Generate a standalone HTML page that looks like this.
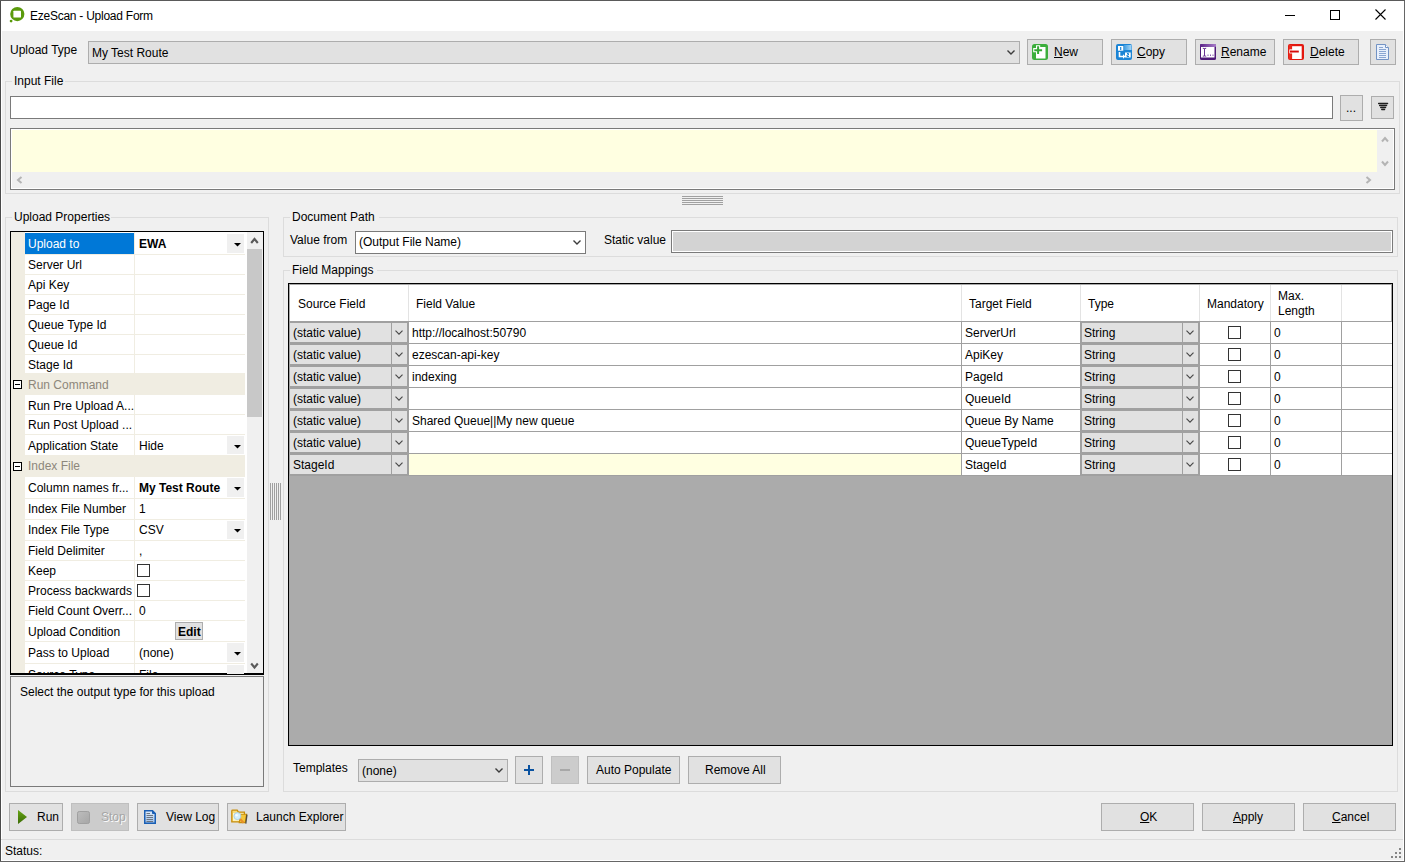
<!DOCTYPE html><html><head><meta charset="utf-8"><style>
html,body{margin:0;padding:0;width:1405px;height:862px;overflow:hidden;background:#f0f0f0}
.a{position:absolute;box-sizing:border-box}
.t{position:absolute;white-space:nowrap;font-family:"Liberation Sans",sans-serif;color:#000}
svg.a{overflow:visible}
</style></head><body>
<div class="a" style="left:0px;top:0px;width:1405px;height:862px;background:#f0f0f0"></div>
<div class="a" style="left:0px;top:0px;width:1405px;height:31px;background:#fff"></div>
<div class="a" style="left:1px;top:31px;width:1px;height:830px;background:#fff"></div>
<div class="a" style="left:1403px;top:31px;width:1px;height:830px;background:#fff"></div>
<div class="a" style="left:1px;top:860px;width:1403px;height:1px;background:#fff"></div>
<div class="a" style="left:0px;top:0px;width:1px;height:862px;background:#4a4a4a"></div>
<div class="a" style="left:1404px;top:0px;width:1px;height:862px;background:#666"></div>
<div class="a" style="left:0px;top:0px;width:1405px;height:1px;background:#5a5a5a"></div>
<div class="a" style="left:0px;top:861px;width:1405px;height:1px;background:#666"></div>
<svg class="a" style="left:9px;top:6px" width="18" height="18" viewBox="0 0 18 18"><circle cx="8.3" cy="8.1" r="7.1" fill="#5a9a0c"/><rect x="4.4" y="4.7" width="7.6" height="6.9" rx="0.6" fill="#fff"/><circle cx="2.1" cy="15.1" r="1.4" fill="#5a9a0c"/></svg>
<div class="t" style="left:30px;top:9px;font-size:12px;line-height:15px;letter-spacing:-0.25px">EzeScan - Upload Form</div>
<div class="a" style="left:1285px;top:15px;width:10px;height:1px;background:#000"></div>
<div class="a" style="left:1330px;top:10px;width:10px;height:10px;border:1px solid #000;"></div>
<svg class="a" style="left:1375px;top:9px" width="12" height="12" viewBox="0 0 12 12"><path d="M0.5 0.5 L10.5 10.5 M10.5 0.5 L0.5 10.5" stroke="#000" stroke-width="1.1"/></svg>
<div class="t" style="left:10px;top:43px;font-size:12px;line-height:15px;">Upload Type</div>
<div class="a" style="left:88px;top:41px;width:932px;height:23px;border:1px solid #adadad;background:#e1e1e1;"></div>
<div class="t" style="left:92px;top:46px;font-size:12px;line-height:15px;">My Test Route</div>
<svg class="a" style="left:1007px;top:50px" width="8" height="5" viewBox="0 0 8 5"><path d="M0.5 0.5 L4 4 L7.5 0.5" fill="none" stroke="#3c3c3c" stroke-width="1.4"/></svg>
<div class="a" style="left:1027px;top:39px;width:76px;height:26px;border:1px solid #adadad;background:#e1e1e1;"></div>
<div class="t" style="left:1054px;top:45px;font-size:12px;line-height:15px;"><u>N</u>ew</div>
<div class="a" style="left:1111px;top:39px;width:76px;height:26px;border:1px solid #adadad;background:#e1e1e1;"></div>
<div class="t" style="left:1137px;top:45px;font-size:12px;line-height:15px;"><u>C</u>opy</div>
<div class="a" style="left:1195px;top:39px;width:80px;height:26px;border:1px solid #adadad;background:#e1e1e1;"></div>
<div class="t" style="left:1221px;top:45px;font-size:12px;line-height:15px;"><u>R</u>ename</div>
<div class="a" style="left:1283px;top:39px;width:76px;height:26px;border:1px solid #adadad;background:#e1e1e1;"></div>
<div class="t" style="left:1310px;top:45px;font-size:12px;line-height:15px;"><u>D</u>elete</div>
<div class="a" style="left:1370px;top:39px;width:26px;height:26px;border:1px solid #adadad;background:#e1e1e1;"></div>
<svg class="a" style="left:1032px;top:44px" width="16" height="16" viewBox="0 0 16 16"><rect x="0" y="0" width="16" height="16" rx="2.5" fill="#3cae3c"/><rect x="4" y="3" width="9.5" height="11.5" fill="#fff"/><path d="M6.1 1.2 v10 M1.2 6.2 h10" stroke="#fff" stroke-width="4.2"/><path d="M6.1 2.3 v7.8 M2.3 6.2 h7.8" stroke="#35a835" stroke-width="2"/></svg>
<svg class="a" style="left:1116px;top:44px" width="16" height="16" viewBox="0 0 16 16"><defs><linearGradient id="cg" x1="0" y1="0" x2="1" y2="0"><stop offset="0" stop-color="#3d9be0"/><stop offset="1" stop-color="#a8d8f8"/></linearGradient></defs><rect x="0" y="0" width="16" height="16" rx="2" fill="#1b84d5"/><rect x="8" y="1" width="7.5" height="5" fill="url(#cg)"/><rect x="2" y="2" width="5.3" height="4.7" fill="#fff"/><path d="M4.7 3 v3" stroke="#1b84d5" stroke-width="1.2"/><path d="M3.5 8 V12.5 H7.5" fill="none" stroke="#fff" stroke-width="1.6"/><path d="M7 10.3 L9.5 12.5 L7 14.7 Z" fill="#fff"/><rect x="9" y="8.5" width="5.7" height="5" fill="#fff"/><path d="M11 9.5 h1.5 v1.5 h-1.5 v1.5 h2" fill="none" stroke="#1b84d5" stroke-width="1"/></svg>
<svg class="a" style="left:1200px;top:44px" width="16" height="16" viewBox="0 0 16 16"><defs><linearGradient id="rg" x1="0" y1="0" x2="1" y2="0"><stop offset="0" stop-color="#5b2288"/><stop offset="1" stop-color="#a77cc8"/></linearGradient></defs><rect x="0" y="0" width="16" height="16" rx="1.5" fill="#4f1a78"/><rect x="0" y="0" width="16" height="3" rx="1" fill="url(#rg)"/><rect x="1" y="3" width="13.5" height="10.5" fill="#fff"/><path d="M4.5 4.5 V12 M2.8 4.3 Q4.5 4.8 6.2 4.3 M2.8 12.2 Q4.5 11.7 6.2 12.2" fill="none" stroke="#6a3494" stroke-width="1"/><path d="M8 10.5 v1.5 M10.5 10.5 v1.5 M13 10.5 v1.5" stroke="#8a5ab0" stroke-width="1"/></svg>
<svg class="a" style="left:1288px;top:44px" width="16" height="16" viewBox="0 0 16 16"><rect x="0" y="0" width="16" height="16" rx="2" fill="#e3170f"/><rect x="0.8" y="1" width="3" height="14" fill="#f03a2a" opacity="0.6"/><rect x="4.1" y="2.2" width="9.6" height="12.8" fill="#fff"/><rect x="1.2" y="5.2" width="10" height="4.4" rx="0.8" fill="#fff" opacity="0.85"/><rect x="2" y="6.6" width="8.8" height="1.9" fill="#d70a0a"/></svg>
<svg class="a" style="left:1376px;top:44px" width="13" height="16" viewBox="0 0 13 16"><path d="M0.5 0.5 H9.5 L12.5 3.5 V15.5 H0.5 Z" fill="#e8f0fc" stroke="#7393c4"/><path d="M9.5 0.5 V3.5 H12.5" fill="#fff" stroke="#7393c4"/><path d="M3 3.5 h4 M3 5.5 h7 M3 7.5 h7 M3 9.5 h7 M3 11.5 h7 M3 13.5 h7" stroke="#8aa6d2" stroke-width="1"/></svg>
<div class="a" style="left:5px;top:81px;width:1395px;height:113px;border:1px solid #dcdcdc;"></div>
<div class="a" style="left:12px;top:78px;width:53px;height:9px;background:#f0f0f0"></div>
<div class="t" style="left:14px;top:74px;font-size:12px;line-height:15px;">Input File</div>
<div class="a" style="left:10px;top:96px;width:1323px;height:23px;border:1px solid #7a7a7a;background:#fff;"></div>
<div class="a" style="left:1340px;top:95px;width:23px;height:26px;border:1px solid #adadad;background:#e1e1e1;"></div>
<div class="t" style="left:1346px;top:101px;font-size:12px;line-height:15px;">...</div>
<div class="a" style="left:1371px;top:96px;width:23px;height:23px;border:1px solid #adadad;background:#e1e1e1;"></div>
<svg class="a" style="left:1377px;top:102px" width="12" height="9" viewBox="0 0 12 9"><path d="M1.6 1.5H10.6 M2.6 3.5H9.6 M3.7 5.5H8.6 M4.7 7.5H7.6" stroke="#1e1e1e" stroke-width="1.3" stroke-linecap="round"/></svg>
<div class="a" style="left:10px;top:128px;width:1385px;height:62px;border:1px solid #7a7a7a;background:#fff;"></div>
<div class="a" style="left:12px;top:130px;width:1381px;height:58px;background:#f0f0f0"></div>
<div class="a" style="left:12px;top:130px;width:1365px;height:42px;background:#ffffe1"></div>
<svg class="a" style="left:1381px;top:136px" width="8" height="7" viewBox="0 0 8 7"><path d="M1 5.5 L4 2 L7 5.5" fill="none" stroke="#b4b4b4" stroke-width="2"/></svg>
<svg class="a" style="left:1381px;top:160px" width="8" height="7" viewBox="0 0 8 7"><path d="M1 1.5 L4 5 L7 1.5" fill="none" stroke="#b4b4b4" stroke-width="2"/></svg>
<svg class="a" style="left:1365px;top:176px" width="7" height="8" viewBox="0 0 7 8"><path d="M1.5 1 L5 4 L1.5 7" fill="none" stroke="#b4b4b4" stroke-width="2"/></svg>
<svg class="a" style="left:16px;top:176px" width="7" height="8" viewBox="0 0 7 8"><path d="M5.5 1 L2 4 L5.5 7" fill="none" stroke="#b4b4b4" stroke-width="2"/></svg>
<div class="a" style="left:682px;top:196px;width:41px;height:1px;background:#a0a0a0"></div>
<div class="a" style="left:682px;top:198px;width:41px;height:1px;background:#a0a0a0"></div>
<div class="a" style="left:682px;top:200px;width:41px;height:1px;background:#a0a0a0"></div>
<div class="a" style="left:682px;top:202px;width:41px;height:1px;background:#a0a0a0"></div>
<div class="a" style="left:682px;top:204px;width:41px;height:1px;background:#a0a0a0"></div>
<div class="a" style="left:5px;top:217px;width:264px;height:575px;border:1px solid #dcdcdc;"></div>
<div class="a" style="left:12px;top:210px;width:99px;height:13px;background:#f0f0f0"></div>
<div class="t" style="left:14px;top:210px;font-size:12px;line-height:15px;">Upload Properties</div>
<div class="a" style="left:10px;top:231px;width:254px;height:443px;border:1px solid #000;background:#fff;"></div>
<div class="a" style="left:11px;top:232px;width:14px;height:441px;background:#f0ede2"></div>
<div class="a" style="left:247px;top:232px;width:16px;height:441px;background:#f0f0f0"></div>
<div class="a" style="left:247px;top:249px;width:15px;height:168px;background:#c8c8c8"></div>
<svg class="a" style="left:250px;top:236px" width="9" height="9" viewBox="0 0 9 9"><path d="M1.2 7 L4.5 3 L7.8 7" fill="none" stroke="#5a5a5a" stroke-width="2.1"/></svg>
<svg class="a" style="left:250px;top:661px" width="9" height="9" viewBox="0 0 9 9"><path d="M1.2 2.5 L4.5 6.5 L7.8 2.5" fill="none" stroke="#5a5a5a" stroke-width="2.1"/></svg>
<div class="a" style="left:25px;top:254px;width:222px;height:1px;background:#f0ede2"></div>
<div class="a" style="left:25px;top:233px;width:109px;height:21px;background:#0078d7"></div>
<div class="t" style="left:28px;top:237px;font-size:12px;line-height:15px;color:#fff">Upload to</div>
<div class="t" style="left:139px;top:237px;font-size:12px;line-height:15px;"><b>EWA</b></div>
<div class="a" style="left:227px;top:234px;width:17px;height:19px;background:#f0f0f0"></div>
<svg class="a" style="left:233.5px;top:243px" width="7" height="4" viewBox="0 0 7 4"><path d="M0 0 H7 L3.5 3.6 Z" fill="#000"/></svg>
<div class="a" style="left:25px;top:274px;width:222px;height:1px;background:#f0ede2"></div>
<div class="t" style="left:28px;top:258px;font-size:12px;line-height:15px;">Server Url</div>
<div class="a" style="left:25px;top:294px;width:222px;height:1px;background:#f0ede2"></div>
<div class="t" style="left:28px;top:278px;font-size:12px;line-height:15px;">Api Key</div>
<div class="a" style="left:25px;top:314px;width:222px;height:1px;background:#f0ede2"></div>
<div class="t" style="left:28px;top:298px;font-size:12px;line-height:15px;">Page Id</div>
<div class="a" style="left:25px;top:334px;width:222px;height:1px;background:#f0ede2"></div>
<div class="t" style="left:28px;top:318px;font-size:12px;line-height:15px;">Queue Type Id</div>
<div class="a" style="left:25px;top:354px;width:222px;height:1px;background:#f0ede2"></div>
<div class="t" style="left:28px;top:338px;font-size:12px;line-height:15px;">Queue Id</div>
<div class="a" style="left:25px;top:373px;width:222px;height:1px;background:#f0ede2"></div>
<div class="t" style="left:28px;top:358px;font-size:12px;line-height:15px;">Stage Id</div>
<div class="a" style="left:25px;top:374px;width:222px;height:21px;background:#f0ede2"></div>
<div class="a" style="left:13px;top:380px;width:9px;height:9px;border:1px solid #000;background:#fff;"></div>
<div class="a" style="left:15px;top:384px;width:5px;height:1px;background:#000"></div>
<div class="t" style="left:28px;top:378px;font-size:12px;line-height:15px;color:#8d877b">Run Command</div>
<div class="a" style="left:25px;top:414px;width:222px;height:1px;background:#f0ede2"></div>
<div class="t" style="left:28px;top:399px;font-size:12px;line-height:15px;">Run Pre Upload A...</div>
<div class="a" style="left:25px;top:434px;width:222px;height:1px;background:#f0ede2"></div>
<div class="t" style="left:28px;top:418px;font-size:12px;line-height:15px;">Run Post Upload ...</div>
<div class="a" style="left:25px;top:455px;width:222px;height:1px;background:#f0ede2"></div>
<div class="t" style="left:28px;top:439px;font-size:12px;line-height:15px;">Application State</div>
<div class="t" style="left:139px;top:439px;font-size:12px;line-height:15px;">Hide</div>
<div class="a" style="left:227px;top:436px;width:17px;height:18px;background:#f0f0f0"></div>
<svg class="a" style="left:233.5px;top:445px" width="7" height="4" viewBox="0 0 7 4"><path d="M0 0 H7 L3.5 3.6 Z" fill="#000"/></svg>
<div class="a" style="left:25px;top:456px;width:222px;height:21px;background:#f0ede2"></div>
<div class="a" style="left:13px;top:462px;width:9px;height:9px;border:1px solid #000;background:#fff;"></div>
<div class="a" style="left:15px;top:466px;width:5px;height:1px;background:#000"></div>
<div class="t" style="left:28px;top:459px;font-size:12px;line-height:15px;color:#8d877b">Index File</div>
<div class="a" style="left:25px;top:498px;width:222px;height:1px;background:#f0ede2"></div>
<div class="t" style="left:28px;top:481px;font-size:12px;line-height:15px;">Column names fr...</div>
<div class="t" style="left:139px;top:481px;font-size:12px;line-height:15px;"><b>My Test Route</b></div>
<div class="a" style="left:227px;top:478px;width:17px;height:19px;background:#f0f0f0"></div>
<svg class="a" style="left:233.5px;top:487px" width="7" height="4" viewBox="0 0 7 4"><path d="M0 0 H7 L3.5 3.6 Z" fill="#000"/></svg>
<div class="a" style="left:25px;top:519px;width:222px;height:1px;background:#f0ede2"></div>
<div class="t" style="left:28px;top:502px;font-size:12px;line-height:15px;">Index File Number</div>
<div class="t" style="left:139px;top:502px;font-size:12px;line-height:15px;">1</div>
<div class="a" style="left:25px;top:540px;width:222px;height:1px;background:#f0ede2"></div>
<div class="t" style="left:28px;top:523px;font-size:12px;line-height:15px;">Index File Type</div>
<div class="t" style="left:139px;top:523px;font-size:12px;line-height:15px;">CSV</div>
<div class="a" style="left:227px;top:521px;width:17px;height:18px;background:#f0f0f0"></div>
<svg class="a" style="left:233.5px;top:529px" width="7" height="4" viewBox="0 0 7 4"><path d="M0 0 H7 L3.5 3.6 Z" fill="#000"/></svg>
<div class="a" style="left:25px;top:560px;width:222px;height:1px;background:#f0ede2"></div>
<div class="t" style="left:28px;top:544px;font-size:12px;line-height:15px;">Field Delimiter</div>
<div class="t" style="left:139px;top:544px;font-size:12px;line-height:15px;">,</div>
<div class="a" style="left:25px;top:580px;width:222px;height:1px;background:#f0ede2"></div>
<div class="t" style="left:28px;top:564px;font-size:12px;line-height:15px;">Keep</div>
<div class="a" style="left:137px;top:564px;width:13px;height:13px;border:1px solid #333;background:#fff;"></div>
<div class="a" style="left:25px;top:600px;width:222px;height:1px;background:#f0ede2"></div>
<div class="t" style="left:28px;top:584px;font-size:12px;line-height:15px;">Process backwards</div>
<div class="a" style="left:137px;top:584px;width:13px;height:13px;border:1px solid #333;background:#fff;"></div>
<div class="a" style="left:25px;top:620px;width:222px;height:1px;background:#f0ede2"></div>
<div class="t" style="left:28px;top:604px;font-size:12px;line-height:15px;">Field Count Overr...</div>
<div class="t" style="left:139px;top:604px;font-size:12px;line-height:15px;">0</div>
<div class="a" style="left:25px;top:641px;width:222px;height:1px;background:#f0ede2"></div>
<div class="t" style="left:28px;top:625px;font-size:12px;line-height:15px;">Upload Condition</div>
<div class="a" style="left:175px;top:622px;width:28px;height:18px;border:1px solid #adadad;background:#e1e1e1;"></div>
<div class="t" style="left:178px;top:625px;font-size:12px;line-height:15px;"><b>Edit</b></div>
<div class="a" style="left:25px;top:663px;width:222px;height:1px;background:#f0ede2"></div>
<div class="t" style="left:28px;top:646px;font-size:12px;line-height:15px;">Pass to Upload</div>
<div class="t" style="left:139px;top:646px;font-size:12px;line-height:15px;">(none)</div>
<div class="a" style="left:227px;top:643px;width:17px;height:19px;background:#f0f0f0"></div>
<svg class="a" style="left:233.5px;top:652px" width="7" height="4" viewBox="0 0 7 4"><path d="M0 0 H7 L3.5 3.6 Z" fill="#000"/></svg>
<div class="a" style="left:25px;top:685px;width:222px;height:1px;background:#f0ede2"></div>
<div class="t" style="left:28px;top:668px;font-size:12px;line-height:15px;">Source Type</div>
<div class="t" style="left:139px;top:668px;font-size:12px;line-height:15px;">File</div>
<div class="a" style="left:227px;top:665px;width:17px;height:19px;background:#f0f0f0"></div>
<svg class="a" style="left:233.5px;top:674px" width="7" height="4" viewBox="0 0 7 4"><path d="M0 0 H7 L3.5 3.6 Z" fill="#000"/></svg>
<div class="a" style="left:134px;top:232px;width:1px;height:441px;background:#f0ede2"></div>
<div class="a" style="left:245px;top:232px;width:2px;height:441px;background:#fff"></div>
<div class="a" style="left:10px;top:674px;width:254px;height:1px;background:#000"></div>
<div class="a" style="left:10px;top:675px;width:254px;height:1px;background:#f0f0f0"></div>
<div class="a" style="left:10px;top:676px;width:254px;height:111px;border:1px solid #7a7a7a;background:#f0f0f0;"></div>
<div class="t" style="left:20px;top:685px;font-size:12px;line-height:15px;">Select the output type for this upload</div>
<div class="a" style="left:270px;top:483px;width:1px;height:37px;background:#a0a0a0"></div>
<div class="a" style="left:272px;top:483px;width:1px;height:37px;background:#a0a0a0"></div>
<div class="a" style="left:274px;top:483px;width:1px;height:37px;background:#a0a0a0"></div>
<div class="a" style="left:276px;top:483px;width:1px;height:37px;background:#a0a0a0"></div>
<div class="a" style="left:278px;top:483px;width:1px;height:37px;background:#a0a0a0"></div>
<div class="a" style="left:280px;top:483px;width:1px;height:37px;background:#a0a0a0"></div>
<div class="a" style="left:283px;top:217px;width:1115px;height:40px;border:1px solid #dcdcdc;"></div>
<div class="a" style="left:290px;top:210px;width:89px;height:13px;background:#f0f0f0"></div>
<div class="t" style="left:292px;top:210px;font-size:12px;line-height:15px;">Document Path</div>
<div class="t" style="left:290px;top:233px;font-size:12px;line-height:15px;">Value from</div>
<div class="a" style="left:355px;top:231px;width:231px;height:23px;border:1px solid #7a7a7a;background:#fff;"></div>
<div class="t" style="left:359px;top:235px;font-size:12px;line-height:15px;">(Output File Name)</div>
<svg class="a" style="left:573px;top:240px" width="8" height="5" viewBox="0 0 8 5"><path d="M0.5 0.5 L4 4 L7.5 0.5" fill="none" stroke="#3c3c3c" stroke-width="1.4"/></svg>
<div class="t" style="left:604px;top:233px;font-size:12px;line-height:15px;">Static value</div>
<div class="a" style="left:671px;top:230px;width:722px;height:23px;border:1px solid #7a7a7a;background:#fff;"></div>
<div class="a" style="left:673px;top:232px;width:718px;height:19px;background:#d3d3d3"></div>
<div class="a" style="left:283px;top:270px;width:1115px;height:522px;border:1px solid #dcdcdc;"></div>
<div class="a" style="left:290px;top:263px;width:87px;height:14px;background:#f0f0f0"></div>
<div class="t" style="left:292px;top:263px;font-size:12px;line-height:15px;">Field Mappings</div>
<div class="a" style="left:288px;top:283px;width:1105px;height:463px;border:1px solid #000;background:#ababab;"></div>
<div class="a" style="left:289px;top:284px;width:1103px;height:461px;border:1px solid #a8a8a8;"></div>
<div class="a" style="left:290px;top:285px;width:1101px;height:36px;background:#fff"></div>
<div class="a" style="left:289px;top:321px;width:1103px;height:1px;background:#a0a0a0"></div>
<div class="a" style="left:408px;top:285px;width:1px;height:36px;background:#e3e3e3"></div>
<div class="a" style="left:961px;top:285px;width:1px;height:36px;background:#e3e3e3"></div>
<div class="a" style="left:1080px;top:285px;width:1px;height:36px;background:#e3e3e3"></div>
<div class="a" style="left:1199px;top:285px;width:1px;height:36px;background:#e3e3e3"></div>
<div class="a" style="left:1270px;top:285px;width:1px;height:36px;background:#e3e3e3"></div>
<div class="a" style="left:1341px;top:285px;width:1px;height:36px;background:#e3e3e3"></div>
<div class="t" style="left:298px;top:297px;font-size:12px;line-height:15px;">Source Field</div>
<div class="t" style="left:416px;top:297px;font-size:12px;line-height:15px;">Field Value</div>
<div class="t" style="left:969px;top:297px;font-size:12px;line-height:15px;">Target Field</div>
<div class="t" style="left:1088px;top:297px;font-size:12px;line-height:15px;">Type</div>
<div class="t" style="left:1207px;top:297px;font-size:12px;line-height:15px;">Mandatory</div>
<div class="t" style="left:1278px;top:289px;font-size:12px;line-height:15px;">Max.</div>
<div class="t" style="left:1278px;top:304px;font-size:12px;line-height:15px;">Length</div>
<div class="a" style="left:289px;top:322px;width:1103px;height:22px;background:#fff"></div>
<div class="a" style="left:289px;top:343px;width:1103px;height:1px;background:#a0a0a0"></div>
<div class="a" style="left:408px;top:322px;width:1px;height:22px;background:#a0a0a0"></div>
<div class="a" style="left:961px;top:322px;width:1px;height:22px;background:#a0a0a0"></div>
<div class="a" style="left:1080px;top:322px;width:1px;height:22px;background:#a0a0a0"></div>
<div class="a" style="left:1199px;top:322px;width:1px;height:22px;background:#a0a0a0"></div>
<div class="a" style="left:1270px;top:322px;width:1px;height:22px;background:#a0a0a0"></div>
<div class="a" style="left:1341px;top:322px;width:1px;height:22px;background:#a0a0a0"></div>
<div class="a" style="left:289px;top:322px;width:119px;height:21px;border:1px solid #a0a0a0;background:#e1e1e1;"></div>
<div class="a" style="left:391px;top:322px;width:1px;height:21px;background:#a0a0a0"></div>
<svg class="a" style="left:395px;top:330px" width="8" height="6" viewBox="0 0 8 6"><path d="M0.5 0.6 L4 4.1 L7.5 0.6" fill="none" stroke="#484848" stroke-width="1.15"/></svg>
<div class="a" style="left:1081px;top:322px;width:118px;height:21px;border:1px solid #a0a0a0;background:#e1e1e1;"></div>
<div class="a" style="left:1182px;top:322px;width:1px;height:21px;background:#a0a0a0"></div>
<svg class="a" style="left:1186px;top:330px" width="8" height="6" viewBox="0 0 8 6"><path d="M0.5 0.6 L4 4.1 L7.5 0.6" fill="none" stroke="#484848" stroke-width="1.15"/></svg>
<div class="t" style="left:293px;top:326px;font-size:12px;line-height:15px;">(static value)</div>
<div class="t" style="left:412px;top:326px;font-size:12px;line-height:15px;">http://localhost:50790</div>
<div class="t" style="left:965px;top:326px;font-size:12px;line-height:15px;">ServerUrl</div>
<div class="t" style="left:1084px;top:326px;font-size:12px;line-height:15px;">String</div>
<div class="a" style="left:1228px;top:326px;width:13px;height:13px;border:1px solid #333;background:#fff;"></div>
<div class="t" style="left:1274px;top:326px;font-size:12px;line-height:15px;">0</div>
<div class="a" style="left:289px;top:344px;width:1103px;height:22px;background:#fff"></div>
<div class="a" style="left:289px;top:365px;width:1103px;height:1px;background:#a0a0a0"></div>
<div class="a" style="left:408px;top:344px;width:1px;height:22px;background:#a0a0a0"></div>
<div class="a" style="left:961px;top:344px;width:1px;height:22px;background:#a0a0a0"></div>
<div class="a" style="left:1080px;top:344px;width:1px;height:22px;background:#a0a0a0"></div>
<div class="a" style="left:1199px;top:344px;width:1px;height:22px;background:#a0a0a0"></div>
<div class="a" style="left:1270px;top:344px;width:1px;height:22px;background:#a0a0a0"></div>
<div class="a" style="left:1341px;top:344px;width:1px;height:22px;background:#a0a0a0"></div>
<div class="a" style="left:289px;top:344px;width:119px;height:21px;border:1px solid #a0a0a0;background:#e1e1e1;"></div>
<div class="a" style="left:391px;top:344px;width:1px;height:21px;background:#a0a0a0"></div>
<svg class="a" style="left:395px;top:352px" width="8" height="6" viewBox="0 0 8 6"><path d="M0.5 0.6 L4 4.1 L7.5 0.6" fill="none" stroke="#484848" stroke-width="1.15"/></svg>
<div class="a" style="left:1081px;top:344px;width:118px;height:21px;border:1px solid #a0a0a0;background:#e1e1e1;"></div>
<div class="a" style="left:1182px;top:344px;width:1px;height:21px;background:#a0a0a0"></div>
<svg class="a" style="left:1186px;top:352px" width="8" height="6" viewBox="0 0 8 6"><path d="M0.5 0.6 L4 4.1 L7.5 0.6" fill="none" stroke="#484848" stroke-width="1.15"/></svg>
<div class="t" style="left:293px;top:348px;font-size:12px;line-height:15px;">(static value)</div>
<div class="t" style="left:412px;top:348px;font-size:12px;line-height:15px;">ezescan-api-key</div>
<div class="t" style="left:965px;top:348px;font-size:12px;line-height:15px;">ApiKey</div>
<div class="t" style="left:1084px;top:348px;font-size:12px;line-height:15px;">String</div>
<div class="a" style="left:1228px;top:348px;width:13px;height:13px;border:1px solid #333;background:#fff;"></div>
<div class="t" style="left:1274px;top:348px;font-size:12px;line-height:15px;">0</div>
<div class="a" style="left:289px;top:366px;width:1103px;height:22px;background:#fff"></div>
<div class="a" style="left:289px;top:387px;width:1103px;height:1px;background:#a0a0a0"></div>
<div class="a" style="left:408px;top:366px;width:1px;height:22px;background:#a0a0a0"></div>
<div class="a" style="left:961px;top:366px;width:1px;height:22px;background:#a0a0a0"></div>
<div class="a" style="left:1080px;top:366px;width:1px;height:22px;background:#a0a0a0"></div>
<div class="a" style="left:1199px;top:366px;width:1px;height:22px;background:#a0a0a0"></div>
<div class="a" style="left:1270px;top:366px;width:1px;height:22px;background:#a0a0a0"></div>
<div class="a" style="left:1341px;top:366px;width:1px;height:22px;background:#a0a0a0"></div>
<div class="a" style="left:289px;top:366px;width:119px;height:21px;border:1px solid #a0a0a0;background:#e1e1e1;"></div>
<div class="a" style="left:391px;top:366px;width:1px;height:21px;background:#a0a0a0"></div>
<svg class="a" style="left:395px;top:374px" width="8" height="6" viewBox="0 0 8 6"><path d="M0.5 0.6 L4 4.1 L7.5 0.6" fill="none" stroke="#484848" stroke-width="1.15"/></svg>
<div class="a" style="left:1081px;top:366px;width:118px;height:21px;border:1px solid #a0a0a0;background:#e1e1e1;"></div>
<div class="a" style="left:1182px;top:366px;width:1px;height:21px;background:#a0a0a0"></div>
<svg class="a" style="left:1186px;top:374px" width="8" height="6" viewBox="0 0 8 6"><path d="M0.5 0.6 L4 4.1 L7.5 0.6" fill="none" stroke="#484848" stroke-width="1.15"/></svg>
<div class="t" style="left:293px;top:370px;font-size:12px;line-height:15px;">(static value)</div>
<div class="t" style="left:412px;top:370px;font-size:12px;line-height:15px;">indexing</div>
<div class="t" style="left:965px;top:370px;font-size:12px;line-height:15px;">PageId</div>
<div class="t" style="left:1084px;top:370px;font-size:12px;line-height:15px;">String</div>
<div class="a" style="left:1228px;top:370px;width:13px;height:13px;border:1px solid #333;background:#fff;"></div>
<div class="t" style="left:1274px;top:370px;font-size:12px;line-height:15px;">0</div>
<div class="a" style="left:289px;top:388px;width:1103px;height:22px;background:#fff"></div>
<div class="a" style="left:289px;top:409px;width:1103px;height:1px;background:#a0a0a0"></div>
<div class="a" style="left:408px;top:388px;width:1px;height:22px;background:#a0a0a0"></div>
<div class="a" style="left:961px;top:388px;width:1px;height:22px;background:#a0a0a0"></div>
<div class="a" style="left:1080px;top:388px;width:1px;height:22px;background:#a0a0a0"></div>
<div class="a" style="left:1199px;top:388px;width:1px;height:22px;background:#a0a0a0"></div>
<div class="a" style="left:1270px;top:388px;width:1px;height:22px;background:#a0a0a0"></div>
<div class="a" style="left:1341px;top:388px;width:1px;height:22px;background:#a0a0a0"></div>
<div class="a" style="left:289px;top:388px;width:119px;height:21px;border:1px solid #a0a0a0;background:#e1e1e1;"></div>
<div class="a" style="left:391px;top:388px;width:1px;height:21px;background:#a0a0a0"></div>
<svg class="a" style="left:395px;top:396px" width="8" height="6" viewBox="0 0 8 6"><path d="M0.5 0.6 L4 4.1 L7.5 0.6" fill="none" stroke="#484848" stroke-width="1.15"/></svg>
<div class="a" style="left:1081px;top:388px;width:118px;height:21px;border:1px solid #a0a0a0;background:#e1e1e1;"></div>
<div class="a" style="left:1182px;top:388px;width:1px;height:21px;background:#a0a0a0"></div>
<svg class="a" style="left:1186px;top:396px" width="8" height="6" viewBox="0 0 8 6"><path d="M0.5 0.6 L4 4.1 L7.5 0.6" fill="none" stroke="#484848" stroke-width="1.15"/></svg>
<div class="t" style="left:293px;top:392px;font-size:12px;line-height:15px;">(static value)</div>
<div class="t" style="left:965px;top:392px;font-size:12px;line-height:15px;">QueueId</div>
<div class="t" style="left:1084px;top:392px;font-size:12px;line-height:15px;">String</div>
<div class="a" style="left:1228px;top:392px;width:13px;height:13px;border:1px solid #333;background:#fff;"></div>
<div class="t" style="left:1274px;top:392px;font-size:12px;line-height:15px;">0</div>
<div class="a" style="left:289px;top:410px;width:1103px;height:22px;background:#fff"></div>
<div class="a" style="left:289px;top:431px;width:1103px;height:1px;background:#a0a0a0"></div>
<div class="a" style="left:408px;top:410px;width:1px;height:22px;background:#a0a0a0"></div>
<div class="a" style="left:961px;top:410px;width:1px;height:22px;background:#a0a0a0"></div>
<div class="a" style="left:1080px;top:410px;width:1px;height:22px;background:#a0a0a0"></div>
<div class="a" style="left:1199px;top:410px;width:1px;height:22px;background:#a0a0a0"></div>
<div class="a" style="left:1270px;top:410px;width:1px;height:22px;background:#a0a0a0"></div>
<div class="a" style="left:1341px;top:410px;width:1px;height:22px;background:#a0a0a0"></div>
<div class="a" style="left:289px;top:410px;width:119px;height:21px;border:1px solid #a0a0a0;background:#e1e1e1;"></div>
<div class="a" style="left:391px;top:410px;width:1px;height:21px;background:#a0a0a0"></div>
<svg class="a" style="left:395px;top:418px" width="8" height="6" viewBox="0 0 8 6"><path d="M0.5 0.6 L4 4.1 L7.5 0.6" fill="none" stroke="#484848" stroke-width="1.15"/></svg>
<div class="a" style="left:1081px;top:410px;width:118px;height:21px;border:1px solid #a0a0a0;background:#e1e1e1;"></div>
<div class="a" style="left:1182px;top:410px;width:1px;height:21px;background:#a0a0a0"></div>
<svg class="a" style="left:1186px;top:418px" width="8" height="6" viewBox="0 0 8 6"><path d="M0.5 0.6 L4 4.1 L7.5 0.6" fill="none" stroke="#484848" stroke-width="1.15"/></svg>
<div class="t" style="left:293px;top:414px;font-size:12px;line-height:15px;">(static value)</div>
<div class="t" style="left:412px;top:414px;font-size:12px;line-height:15px;">Shared Queue||My new queue</div>
<div class="t" style="left:965px;top:414px;font-size:12px;line-height:15px;">Queue By Name</div>
<div class="t" style="left:1084px;top:414px;font-size:12px;line-height:15px;">String</div>
<div class="a" style="left:1228px;top:414px;width:13px;height:13px;border:1px solid #333;background:#fff;"></div>
<div class="t" style="left:1274px;top:414px;font-size:12px;line-height:15px;">0</div>
<div class="a" style="left:289px;top:432px;width:1103px;height:22px;background:#fff"></div>
<div class="a" style="left:289px;top:453px;width:1103px;height:1px;background:#a0a0a0"></div>
<div class="a" style="left:408px;top:432px;width:1px;height:22px;background:#a0a0a0"></div>
<div class="a" style="left:961px;top:432px;width:1px;height:22px;background:#a0a0a0"></div>
<div class="a" style="left:1080px;top:432px;width:1px;height:22px;background:#a0a0a0"></div>
<div class="a" style="left:1199px;top:432px;width:1px;height:22px;background:#a0a0a0"></div>
<div class="a" style="left:1270px;top:432px;width:1px;height:22px;background:#a0a0a0"></div>
<div class="a" style="left:1341px;top:432px;width:1px;height:22px;background:#a0a0a0"></div>
<div class="a" style="left:289px;top:432px;width:119px;height:21px;border:1px solid #a0a0a0;background:#e1e1e1;"></div>
<div class="a" style="left:391px;top:432px;width:1px;height:21px;background:#a0a0a0"></div>
<svg class="a" style="left:395px;top:440px" width="8" height="6" viewBox="0 0 8 6"><path d="M0.5 0.6 L4 4.1 L7.5 0.6" fill="none" stroke="#484848" stroke-width="1.15"/></svg>
<div class="a" style="left:1081px;top:432px;width:118px;height:21px;border:1px solid #a0a0a0;background:#e1e1e1;"></div>
<div class="a" style="left:1182px;top:432px;width:1px;height:21px;background:#a0a0a0"></div>
<svg class="a" style="left:1186px;top:440px" width="8" height="6" viewBox="0 0 8 6"><path d="M0.5 0.6 L4 4.1 L7.5 0.6" fill="none" stroke="#484848" stroke-width="1.15"/></svg>
<div class="t" style="left:293px;top:436px;font-size:12px;line-height:15px;">(static value)</div>
<div class="t" style="left:965px;top:436px;font-size:12px;line-height:15px;">QueueTypeId</div>
<div class="t" style="left:1084px;top:436px;font-size:12px;line-height:15px;">String</div>
<div class="a" style="left:1228px;top:436px;width:13px;height:13px;border:1px solid #333;background:#fff;"></div>
<div class="t" style="left:1274px;top:436px;font-size:12px;line-height:15px;">0</div>
<div class="a" style="left:289px;top:454px;width:1103px;height:22px;background:#fff"></div>
<div class="a" style="left:289px;top:475px;width:1103px;height:1px;background:#a0a0a0"></div>
<div class="a" style="left:408px;top:454px;width:1px;height:22px;background:#a0a0a0"></div>
<div class="a" style="left:961px;top:454px;width:1px;height:22px;background:#a0a0a0"></div>
<div class="a" style="left:1080px;top:454px;width:1px;height:22px;background:#a0a0a0"></div>
<div class="a" style="left:1199px;top:454px;width:1px;height:22px;background:#a0a0a0"></div>
<div class="a" style="left:1270px;top:454px;width:1px;height:22px;background:#a0a0a0"></div>
<div class="a" style="left:1341px;top:454px;width:1px;height:22px;background:#a0a0a0"></div>
<div class="a" style="left:409px;top:454px;width:552px;height:21px;background:#ffffe1"></div>
<div class="a" style="left:289px;top:454px;width:119px;height:21px;border:1px solid #a0a0a0;background:#e1e1e1;"></div>
<div class="a" style="left:391px;top:454px;width:1px;height:21px;background:#a0a0a0"></div>
<svg class="a" style="left:395px;top:462px" width="8" height="6" viewBox="0 0 8 6"><path d="M0.5 0.6 L4 4.1 L7.5 0.6" fill="none" stroke="#484848" stroke-width="1.15"/></svg>
<div class="a" style="left:1081px;top:454px;width:118px;height:21px;border:1px solid #a0a0a0;background:#e1e1e1;"></div>
<div class="a" style="left:1182px;top:454px;width:1px;height:21px;background:#a0a0a0"></div>
<svg class="a" style="left:1186px;top:462px" width="8" height="6" viewBox="0 0 8 6"><path d="M0.5 0.6 L4 4.1 L7.5 0.6" fill="none" stroke="#484848" stroke-width="1.15"/></svg>
<div class="t" style="left:293px;top:458px;font-size:12px;line-height:15px;">StageId</div>
<div class="t" style="left:965px;top:458px;font-size:12px;line-height:15px;">StageId</div>
<div class="t" style="left:1084px;top:458px;font-size:12px;line-height:15px;">String</div>
<div class="a" style="left:1228px;top:458px;width:13px;height:13px;border:1px solid #333;background:#fff;"></div>
<div class="t" style="left:1274px;top:458px;font-size:12px;line-height:15px;">0</div>
<div class="t" style="left:293px;top:761px;font-size:12px;line-height:15px;">Templates</div>
<div class="a" style="left:358px;top:759px;width:150px;height:23px;border:1px solid #adadad;background:#e1e1e1;"></div>
<div class="t" style="left:362px;top:764px;font-size:12px;line-height:15px;">(none)</div>
<svg class="a" style="left:495px;top:768px" width="8" height="5" viewBox="0 0 8 5"><path d="M0.5 0.5 L4 4 L7.5 0.5" fill="none" stroke="#3c3c3c" stroke-width="1.4"/></svg>
<div class="a" style="left:515px;top:756px;width:28px;height:28px;border:1px solid #adadad;background:#e1e1e1;"></div>
<div class="a" style="left:524px;top:769px;width:10px;height:2px;background:#0a52a0"></div>
<div class="a" style="left:528px;top:765px;width:2px;height:10px;background:#0a52a0"></div>
<div class="a" style="left:551px;top:756px;width:28px;height:28px;border:1px solid #bfbfbf;background:#cccccc;"></div>
<div class="a" style="left:560px;top:769px;width:10px;height:2px;background:#a8a8a8"></div>
<div class="a" style="left:587px;top:756px;width:93px;height:28px;border:1px solid #adadad;background:#e1e1e1;"></div>
<div class="t" style="left:596px;top:763px;font-size:12px;line-height:15px;">Auto Populate</div>
<div class="a" style="left:688px;top:756px;width:93px;height:28px;border:1px solid #adadad;background:#e1e1e1;"></div>
<div class="t" style="left:705px;top:763px;font-size:12px;line-height:15px;">Remove All</div>
<div class="a" style="left:9px;top:803px;width:54px;height:28px;border:1px solid #adadad;background:#e1e1e1;"></div>
<div class="t" style="left:37px;top:810px;font-size:12px;line-height:15px;">Run</div>
<svg class="a" style="left:18px;top:810px" width="9" height="14" viewBox="0 0 9 14"><defs><linearGradient id="rung" x1="0" y1="0" x2="0" y2="1"><stop offset="0" stop-color="#66a514"/><stop offset="1" stop-color="#3b6b06"/></linearGradient></defs><path d="M0 0 L9 7 L0 14 Z" fill="url(#rung)"/></svg>
<div class="a" style="left:71px;top:803px;width:58px;height:28px;border:1px solid #bfbfbf;background:#cccccc;"></div>
<svg class="a" style="left:77px;top:811px" width="13" height="13" viewBox="0 0 13 13"><defs><linearGradient id="stg" x1="0" y1="0" x2="1" y2="1"><stop offset="0" stop-color="#bdbdbd"/><stop offset="1" stop-color="#a6a6a6"/></linearGradient></defs><rect x="0.5" y="0.5" width="12" height="12" rx="1.8" fill="url(#stg)" stroke="#a0a0a0"/></svg>
<div class="t" style="left:101px;top:810px;font-size:12px;line-height:15px;color:#a6a6a6;text-shadow:1px 1px 0 #fbfbfb">Stop</div>
<div class="a" style="left:137px;top:803px;width:82px;height:28px;border:1px solid #adadad;background:#e1e1e1;"></div>
<div class="t" style="left:166px;top:810px;font-size:12px;line-height:15px;">View Log</div>
<svg class="a" style="left:144px;top:810px" width="12" height="14" viewBox="0 0 12 14"><defs><linearGradient id="vlg" x1="0" y1="0" x2="0" y2="1"><stop offset="0" stop-color="#e0ecfa"/><stop offset="1" stop-color="#9ec0e8"/></linearGradient></defs><path d="M0.75 0.75 H8.5 L11.25 3.5 V13.25 H0.75 Z" fill="url(#vlg)" stroke="#1a5fb4" stroke-width="1.5"/><path d="M8.5 0.75 V3.5 H11.25" fill="#1a5fb4" stroke="#1a5fb4" stroke-width="1"/><path d="M2.5 3.5 h3.5 M2.5 5.5 h6.5 M2.5 7.5 h6.5 M2.5 9.5 h6.5 M2.5 11.5 h6.5" stroke="#6c7580" stroke-width="1"/></svg>
<div class="a" style="left:227px;top:803px;width:119px;height:28px;border:1px solid #adadad;background:#e1e1e1;"></div>
<div class="t" style="left:256px;top:810px;font-size:12px;line-height:15px;">Launch Explorer</div>
<svg class="a" style="left:229px;top:805px" width="22" height="24" viewBox="0 0 22 24"><path d="M2.8 6 Q2.8 5.2 3.6 5.2 H8.2 L9.4 7.2 H15.4 V16.8 H2.8 Z" fill="#f8dc78" stroke="#c88e0c" stroke-width="1.3"/><path d="M4 8 H14.5 V15.8 H4 Z" fill="#fff6c8"/><path d="M11.5 9.2 H17.6 L16.2 17.6 H10.2 Z" fill="#f4c63a" stroke="#c88e0c" stroke-width="1.1"/><path d="M18 9.6 L16.8 18.6" stroke="#2a2a2a" stroke-width="1.3" opacity="0.75"/><path d="M10.6 13.6 L14.6 17.8" stroke="#e8902a" stroke-width="2.2"/><circle cx="8.4" cy="11.1" r="3.5" fill="#d4effc" stroke="#a6cde2" stroke-width="0.9"/><circle cx="7.6" cy="10.2" r="1.2" fill="#fff" opacity="0.8"/></svg>
<div class="a" style="left:1101px;top:803px;width:93px;height:28px;border:1px solid #adadad;background:#e1e1e1;"></div>
<div class="t" style="left:1140px;top:810px;font-size:12px;line-height:15px;"><u>O</u>K</div>
<div class="a" style="left:1202px;top:803px;width:93px;height:28px;border:1px solid #adadad;background:#e1e1e1;"></div>
<div class="t" style="left:1233px;top:810px;font-size:12px;line-height:15px;"><u>A</u>pply</div>
<div class="a" style="left:1303px;top:803px;width:93px;height:28px;border:1px solid #adadad;background:#e1e1e1;"></div>
<div class="t" style="left:1332px;top:810px;font-size:12px;line-height:15px;"><u>C</u>ancel</div>
<div class="a" style="left:1px;top:839px;width:1402px;height:1px;background:#dcdcdc"></div>
<div class="t" style="left:5px;top:844px;font-size:12px;line-height:15px;">Status:</div>
<div class="a" style="left:1399px;top:848px;width:2px;height:2px;background:#858585"></div>
<div class="a" style="left:1399px;top:852px;width:2px;height:2px;background:#858585"></div>
<div class="a" style="left:1395px;top:852px;width:2px;height:2px;background:#858585"></div>
<div class="a" style="left:1399px;top:856px;width:2px;height:2px;background:#858585"></div>
<div class="a" style="left:1395px;top:856px;width:2px;height:2px;background:#858585"></div>
<div class="a" style="left:1391px;top:856px;width:2px;height:2px;background:#858585"></div>
</body></html>
